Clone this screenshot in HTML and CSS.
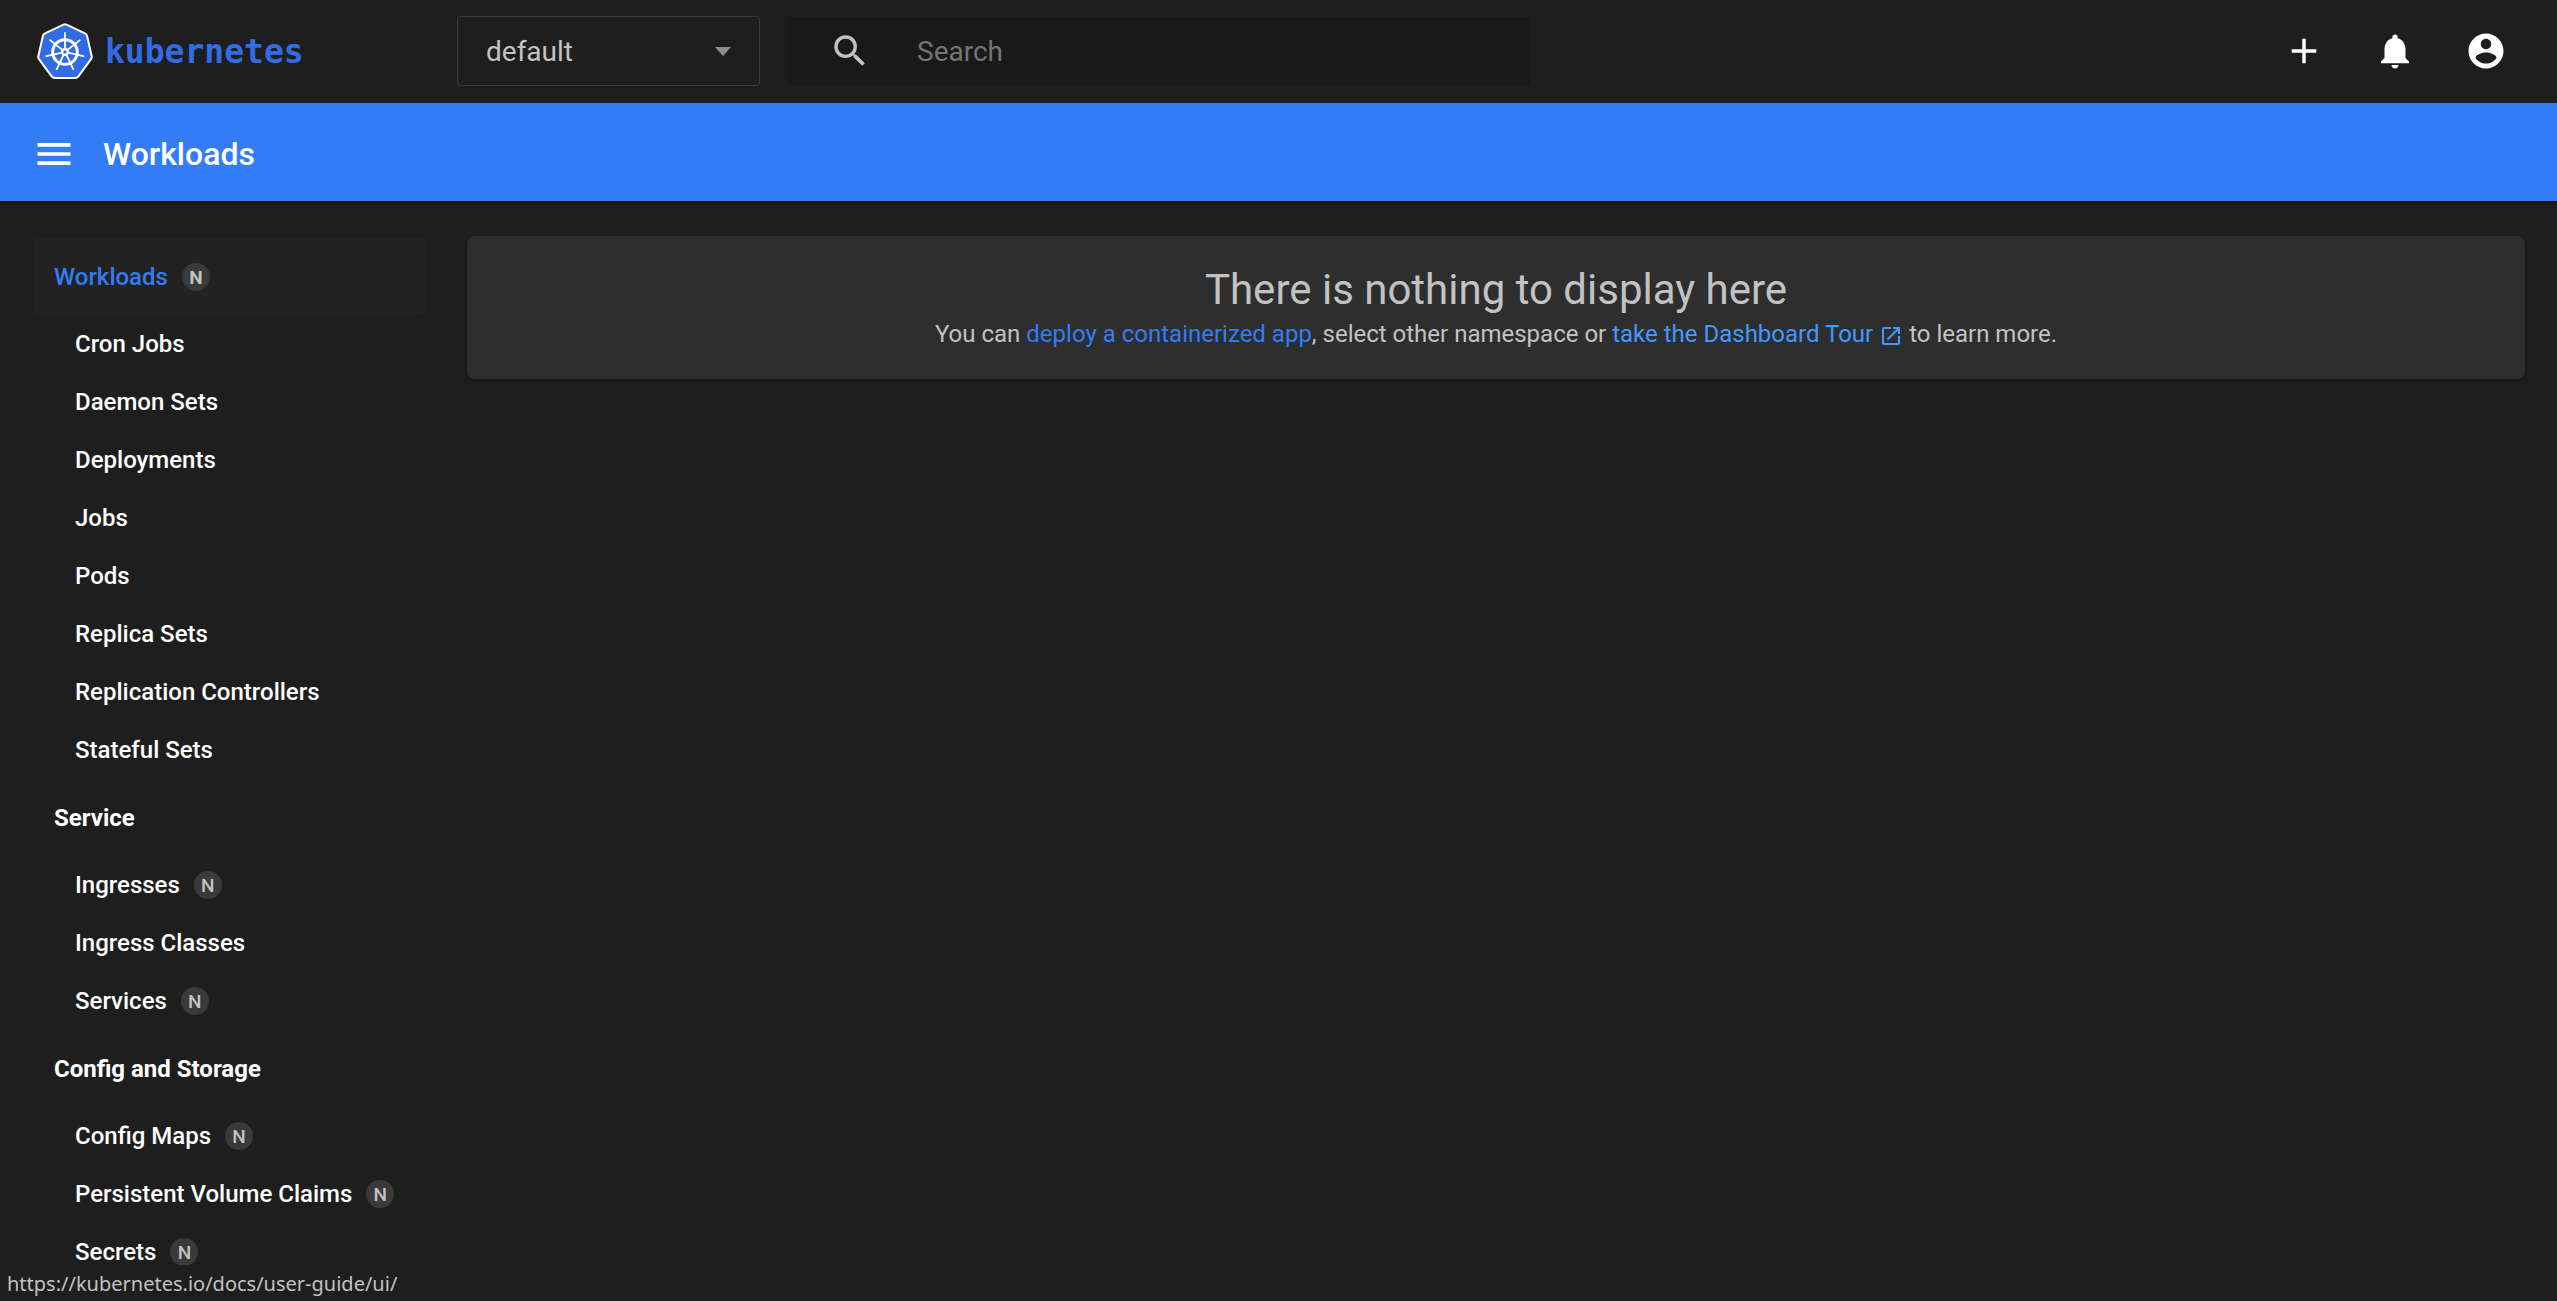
FILE: index.html
```html
<!DOCTYPE html>
<html lang="en">
<head>
<meta charset="utf-8">
<title>Kubernetes Dashboard</title>
<link rel="stylesheet" href="styles.css">
</head>
<body>
<header class="topbar">
  <a class="brand" href="#">
    <svg class="brand-mark" viewBox="0 0 56 56" aria-hidden="true">
      <path d="M26.500 1.600Q28 .9 29.500 1.600L48 10.400Q49.700 11.200 50.100 13L54.700 33.200Q55 34.800 54 36.200L41.200 53.600Q40 55 38.300 55H17.700Q16 55 14.800 53.600L2 36.200Q1 34.800 1.300 33.200L5.900 13Q6.300 11.200 8 10.400Z" fill="#326ce5" stroke="#fff" stroke-width="2" stroke-linejoin="round"/>
      <g fill="none" stroke="#fff" transform="translate(28 29)">
        <circle r="12.300" stroke-width="3"/>
        <g stroke-width="1.800" stroke-linecap="round">
          <path d="M0-3V-19"/>
          <path d="M0-3V-19" transform="rotate(51.430)"/>
          <path d="M0-3V-19" transform="rotate(102.860)"/>
          <path d="M0-3V-19" transform="rotate(154.290)"/>
          <path d="M0-3V-19" transform="rotate(205.710)"/>
          <path d="M0-3V-19" transform="rotate(257.140)"/>
          <path d="M0-3V-19" transform="rotate(308.570)"/>
        </g>
        <circle r="2.800" stroke-width="2.400"/>
      </g>
    </svg>
    <span class="brand-name">kubernetes</span>
  </a>
  <div class="namespace">
    <select class="namespace-select" aria-label="Namespace"><option>default</option></select>
    <svg class="namespace-arrow" viewBox="0 0 16 9" aria-hidden="true"><path d="M0 0H16L8 9Z"/></svg>
  </div>
  <form class="search" role="search">
    <svg class="icon" viewBox="0 0 24 24" aria-hidden="true"><path d="M15.500 14h-.79l-.28-.27A6.471 6.471 0 0 0 16 9.500 6.500 6.500 0 1 0 9.500 16c1.610 0 3.090-.59 4.230-1.570l.27.28v.79l5 4.990L20.490 19l-4.990-5zm-6 0C7.010 14 5 11.990 5 9.500S7.010 5 9.500 5 14 7.010 14 9.500 11.990 14 9.500 14z"/></svg>
    <input class="search-input" type="text" placeholder="Search" aria-label="Search">
  </form>
  <div class="actions">
    <button class="icon-button" type="button" aria-label="Create new resource"><svg class="icon" viewBox="0 0 24 24"><path d="M19 13h-6v6h-2v-6H5v-2h6V5h2v6h6v2z"/></svg></button>
    <button class="icon-button" type="button" aria-label="Notifications"><svg class="icon" viewBox="0 0 24 24"><path d="M12 22c1.100 0 2-.9 2-2h-4c0 1.100.89 2 2 2zm6-6v-5c0-3.070-1.640-5.640-4.500-6.320V4c0-.83-.67-1.500-1.500-1.500s-1.500.67-1.500 1.500v.68C7.630 5.360 6 7.920 6 11v5l-2 2v1h16v-1l-2-2z"/></svg></button>
    <button class="icon-button" type="button" aria-label="Account"><svg class="icon" viewBox="0 0 24 24"><path d="M12 2C6.480 2 2 6.480 2 12s4.480 10 10 10 10-4.480 10-10S17.520 2 12 2zm0 3c1.660 0 3 1.340 3 3s-1.340 3-3 3-3-1.340-3-3 1.340-3 3-3zm0 14.200c-2.500 0-4.710-1.280-6-3.220.03-1.990 4-3.080 6-3.080 1.990 0 5.970 1.090 6 3.080-1.290 1.940-3.500 3.220-6 3.220z"/></svg></button>
  </div>
</header>
<div class="titlebar">
  <button class="menu-button" type="button" aria-label="Toggle navigation"><svg class="icon" viewBox="0 0 24 24"><path d="M3 18h18v-2H3v2zm0-5h18v-2H3v2zm0-7v2h18V6H3z"/></svg></button>
  <h1 class="page-title">Workloads</h1>
</div>
<div class="layout">
  <nav class="sidebar" aria-label="Resources">
    <a class="nav-group active" href="#">Workloads<span class="badge">N</span></a>
    <a class="nav-item" href="#">Cron Jobs</a>
    <a class="nav-item" href="#">Daemon Sets</a>
    <a class="nav-item" href="#">Deployments</a>
    <a class="nav-item" href="#">Jobs</a>
    <a class="nav-item" href="#">Pods</a>
    <a class="nav-item" href="#">Replica Sets</a>
    <a class="nav-item" href="#">Replication Controllers</a>
    <a class="nav-item" href="#">Stateful Sets</a>
    <a class="nav-group" href="#">Service</a>
    <a class="nav-item" href="#">Ingresses<span class="badge">N</span></a>
    <a class="nav-item" href="#">Ingress Classes</a>
    <a class="nav-item" href="#">Services<span class="badge">N</span></a>
    <a class="nav-group" href="#">Config and Storage</a>
    <a class="nav-item" href="#">Config Maps<span class="badge">N</span></a>
    <a class="nav-item" href="#">Persistent Volume Claims<span class="badge">N</span></a>
    <a class="nav-item" href="#">Secrets<span class="badge">N</span></a>
  </nav>
  <main class="content">
    <section class="card">
      <h2 class="card-title">There is nothing to display here</h2>
      <p class="card-text">You can <a class="link" href="#">deploy a containerized app</a>, select other namespace or <a class="link external" href="https://kubernetes.io/docs/user-guide/ui/">take the Dashboard Tour <svg class="open-icon" viewBox="0 0 24 24" aria-hidden="true"><path d="M19 19H5V5h7V3H5c-1.110 0-2 .9-2 2v14c0 1.100.89 2 2 2h14c1.100 0 2-.9 2-2v-7h-2v7zM14 3v2h3.590l-9.830 9.830 1.410 1.410L19 6.410V10h2V3h-7z"/></svg></a> to learn more.</p>
    </section>
  </main>
</div>
<div class="status">https://kubernetes.io/docs/user-guide/ui/</div>
</body>
</html>
```

FILE: styles.css
```css
* {
  box-sizing: border-box;
}

body {
  margin: 0;
  height: 100vh;
  overflow: hidden;
  display: flex;
  flex-direction: column;
  background: #1e1e1e;
  color: #fff;
  font-family: Roboto, sans-serif;
  font-size: 24px;
}

a {
  color: inherit;
  text-decoration: none;
}

button {
  border: 0;
  padding: 0;
  background: none;
  color: inherit;
}

.icon {
  display: block;
  width: 42px;
  height: 42px;
  fill: currentColor;
}

.topbar {
  flex: none;
  display: flex;
  align-items: center;
  height: 103px;
  padding: 0 50px 1px 37px;
}

.brand {
  display: flex;
  align-items: center;
  gap: 12px;
  width: 420px;
}

.brand-mark {
  width: 56px;
  height: 56px;
}

.brand-name {
  color: #326ce5;
  font: bold 33px "DejaVu Sans Mono", monospace;
}

.namespace {
  position: relative;
  width: 303px;
  height: 70px;
}

.namespace-select {
  appearance: none;
  width: 100%;
  height: 100%;
  padding: 0 28px;
  border: 1px solid #3c3c3c;
  border-radius: 4px;
  background: transparent;
  color: #c2c2c2;
  font: 28px Roboto, sans-serif;
}

.namespace-arrow {
  position: absolute;
  top: 31px;
  right: 29px;
  width: 16px;
  height: 9px;
  fill: #8e8e8e;
  pointer-events: none;
}

.search {
  display: flex;
  align-items: center;
  gap: 46px;
  width: 742px;
  height: 68px;
  margin-left: 28px;
  padding: 0 41px;
  border-radius: 4px;
  background: #191919;
  color: #c2c2c2;
}

.search-input {
  flex: 1;
  min-width: 0;
  padding: 0;
  border: 0;
  outline: 0;
  background: transparent;
  color: #c2c2c2;
  font: 28px Roboto, sans-serif;
}

.search-input::placeholder {
  color: #757575;
}

.actions {
  display: flex;
  gap: 49px;
  margin-left: auto;
}

.titlebar {
  flex: none;
  display: flex;
  align-items: center;
  gap: 27px;
  height: 98px;
  padding: 3px 32px 0;
  background: #327df5;
  box-shadow: 0 1px 3px rgba(0, 0, 0, 0.4);
}

.menu-button .icon {
  width: 44px;
  height: 44px;
}

.page-title {
  margin: 0;
  font-size: 32px;
  font-weight: 500;
}

.layout {
  flex: 1;
  min-height: 0;
  display: flex;
  gap: 42px;
  padding: 35px 32px 0 33px;
}

.sidebar {
  flex: none;
  width: 392px;
  padding-top: 2px;
  overflow: hidden;
}

.nav-group,
.nav-item {
  display: flex;
  align-items: center;
  gap: 14px;
}

.nav-group {
  height: 77px;
  padding-left: 21px;
  border-radius: 4px;
  font-weight: 700;
}

.nav-group.active {
  background: #222;
  color: #327df5;
  font-weight: 500;
}

.nav-item {
  height: 58px;
  padding-left: 42px;
  font-weight: 500;
}

.badge {
  width: 28px;
  height: 28px;
  border-radius: 50%;
  background: #3a3a3a;
  color: #c2c2c2;
  font-size: 19px;
  line-height: 30px;
  text-align: center;
}

.nav-group .badge {
  font-weight: 700;
}

.content {
  flex: 1;
  min-width: 0;
}

.card {
  padding: 28px;
  border-radius: 7px;
  background: #2e2e2e;
  box-shadow: 0 2px 4px rgba(0, 0, 0, 0.3);
  color: #c2c2c2;
  text-align: center;
}

.card-title {
  margin: 0;
  font-size: 42px;
  font-weight: 400;
  line-height: 51px;
}

.card-text {
  margin: 0;
  padding-top: 3px;
  line-height: 33px;
}

.link {
  color: #327df5;
}

.link.external {
  color: #4299ff;
}

.open-icon {
  width: 24px;
  height: 24px;
  fill: currentColor;
  vertical-align: middle;
}

.status {
  position: fixed;
  left: 0;
  bottom: 0;
  height: 36px;
  padding: 0 12px 0 7px;
  border-radius: 0 7px 0 0;
  background: #1e1e1e;
  color: #c2c2c2;
  font: 20px/38px "Noto Sans", sans-serif;
}
```
